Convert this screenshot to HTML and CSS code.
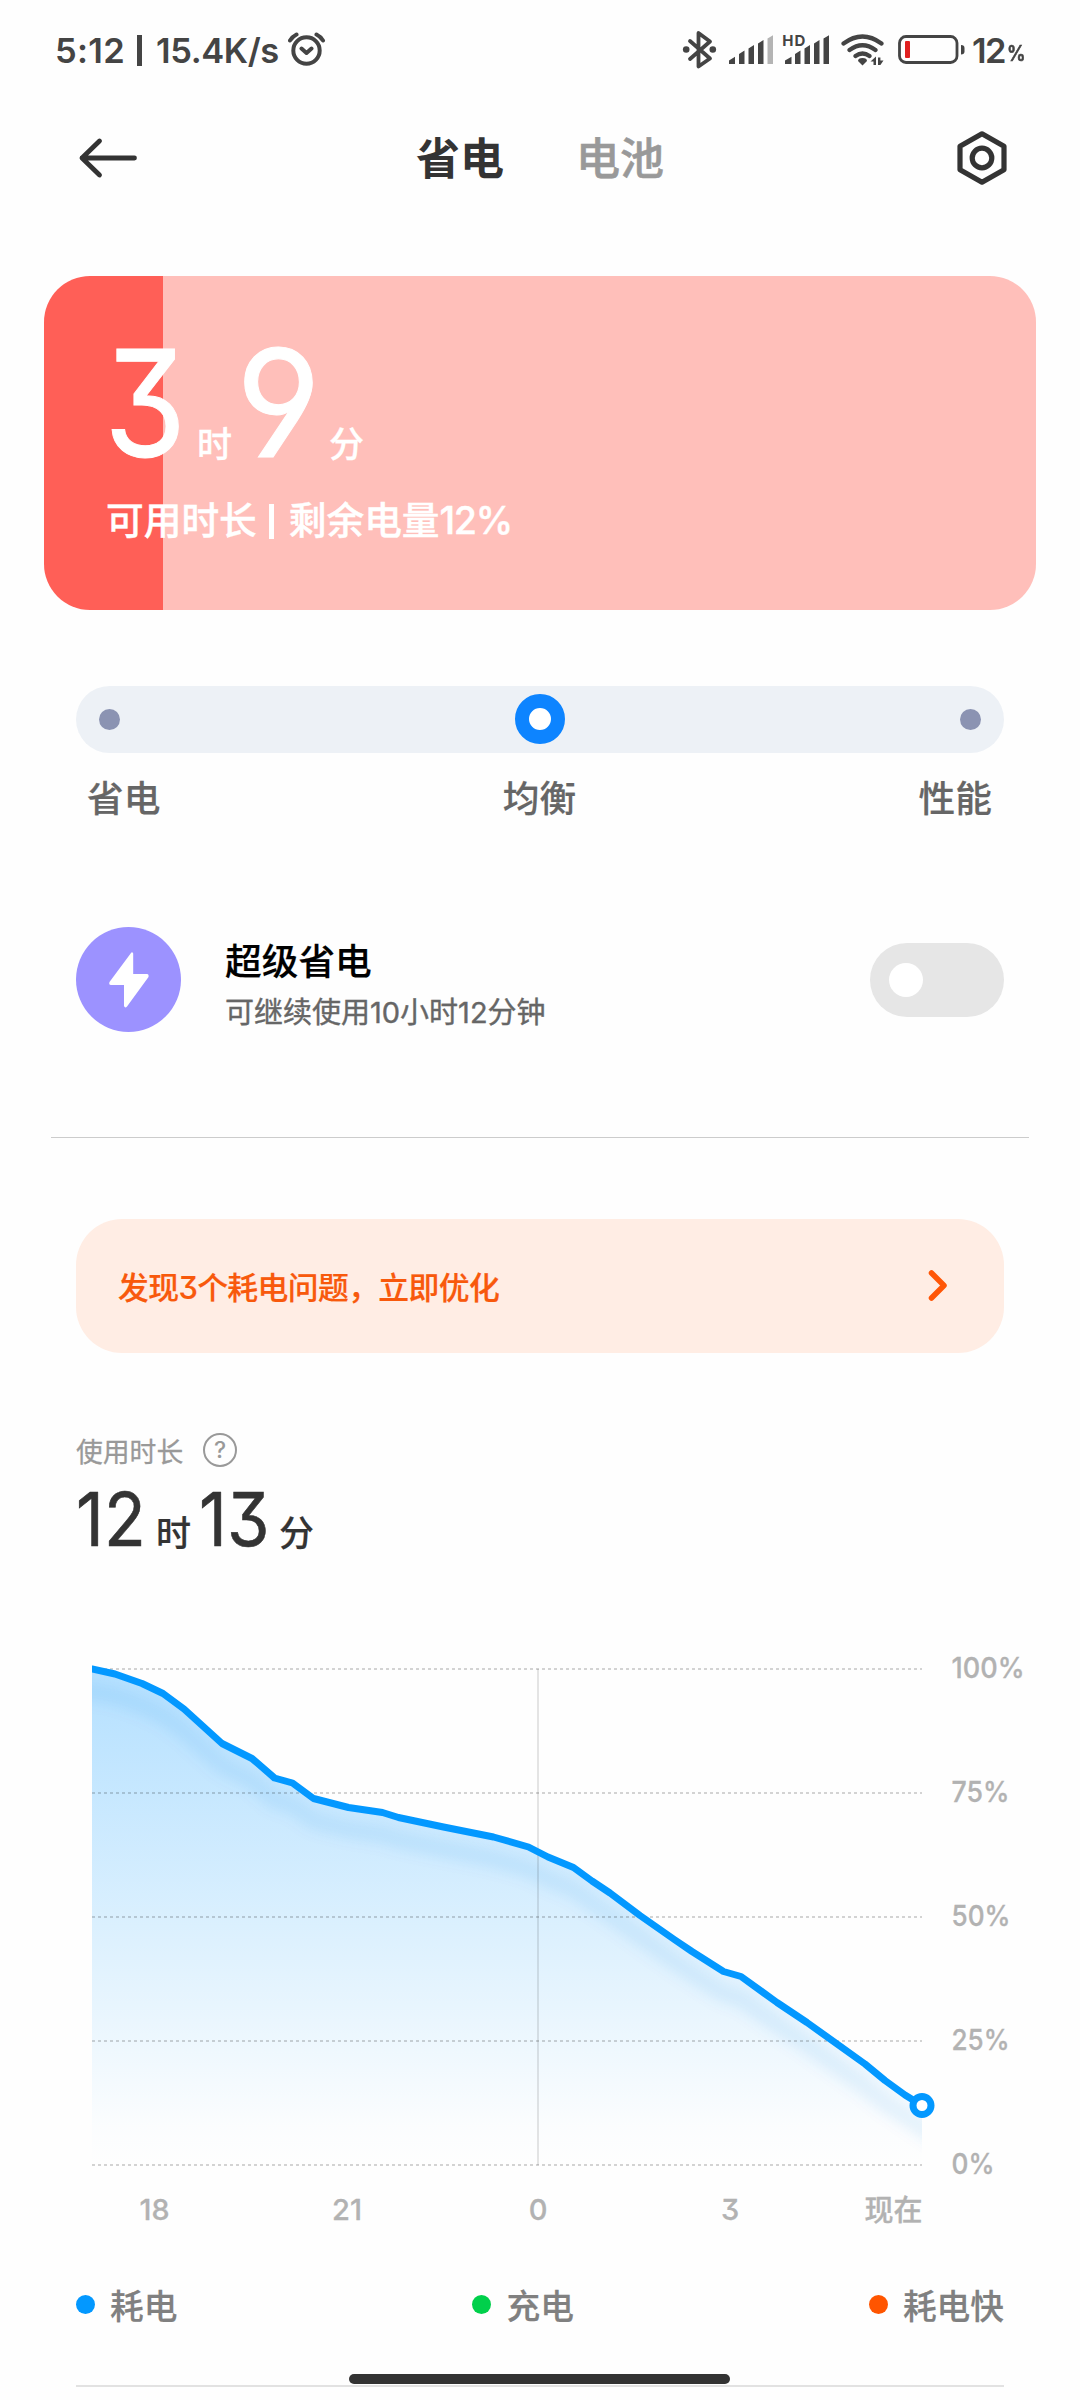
FILE: index.html
```html
<!DOCTYPE html>
<html lang="zh-CN">
<head>
<meta charset="utf-8">
<title>省电</title>
<link rel="stylesheet" href="styles.css">
</head>
<body>
<div class="screen">
  <div class="status">
    <span class="clock">5:12</span>
    <span class="sep"></span>
    <span class="speed">15.4K/s</span>
    <svg class="alarm" width="38" height="36" viewBox="288 32 38 36" fill="none" stroke="#444" stroke-width="4" stroke-linecap="round" stroke-linejoin="round">
      <circle cx="306.500" cy="50.500" r="13.200"/><path d="M290 40.500Q292.500 36.500 296.500 34.500M316.500 34.500Q320.500 36.500 323 40.500M301.500 48.500l5 4.500 5-4.500"/>
    </svg>
    <svg class="icons" width="284" height="44" viewBox="682 28 284 44">
      <g fill="none" stroke="#444" stroke-width="3.800" stroke-linejoin="round" stroke-linecap="round"><path d="M690 41l20 17.500-11.500 8V33l11.500 8.500L690 59"/></g>
      <g fill="#444"><circle cx="686.200" cy="49.500" r="3.300"/><circle cx="712.800" cy="49.500" r="3.300"/>
        <path d="M729 64v-3.500l6-3.800V64zM739 64V54l5.500-3.500V64zM748.500 64V48.500l5.500-3.500V64zM758 64V43.500l5.500-3.500V64z"/>
        <path d="M767.500 64V38.500l5.500-3.300V64z" fill="#b4b4b4"/>
        <path d="M785 64v-3.500l6.500-3.800V64zM795 64V54l5.500-3.500V64zM804.500 64V48.500l5.500-3.500V64zM814 64V43.500l5.500-3.500V64zM823.500 64V38.500l5.500-3.300V64z"/>
        <path d="M862.500 65.500l-4.500-4.500q0-3 4.500-3t4.500 3z"/>
        <path d="M870.500 61.500l5.500-5V65h-2.500v-3.500zM878 57.500h2.400v3h3.100l-3.100 4.500H878z"/>
      </g>
      <text class="hd" x="782.300" y="45.500" textLength="23">HD</text>
      <g fill="none" stroke="#444" stroke-width="4.200" stroke-linecap="round"><path d="M843.500 43.500q19-14 38 0M849.500 50q13-9.500 26 0M855.500 56q7-5 14 0"/></g>
      <rect x="899.500" y="36.500" width="57.500" height="26" rx="6.500" fill="none" stroke="#444" stroke-width="2.800"/>
      <rect x="905" y="41" width="5" height="17" rx="1" fill="#e02020"/>
      <path d="M961 45q3.500 0 3.500 3v3.500q0 3-3.500 3z" fill="#444"/>
    </svg>
    <span class="level">12</span><span class="percent">%</span>
  </div>

  <header class="header">
    <svg class="back" width="60" height="44" viewBox="78 136 60 44" fill="none" stroke="#333" stroke-width="4.800" stroke-linecap="round" stroke-linejoin="round"><path d="M134.500 158H82M99.500 141L82 158l17.500 17"/></svg>
    <nav class="tabs"><span class="tab active">省电</span><span class="tab">电池</span></nav>
    <svg class="gear" width="56" height="60" viewBox="954 128 56 60" fill="none" stroke="#333" stroke-width="5.200" stroke-linejoin="round"><path d="M982 133.800l22 12.500v23.400l-22 12.500-22-12.500v-23.400z"/><circle cx="982" cy="158" r="9.800"/></svg>
  </header>

  <section class="battery">
    <div class="time">
      <span class="num three">3</span><span class="unit">时</span><span class="num nine">9</span><span class="unit">分</span>
    </div>
    <div class="remain"><span>可用时长</span><i class="bar"></i><span>剩余电量</span><span class="pct">12%</span></div>
  </section>

  <div class="slider"><i class="dot"></i><i class="thumb"></i><i class="dot"></i></div>
  <div class="modes"><span>省电</span><span>均衡</span><span>性能</span></div>

  <section class="super">
    <svg width="105" height="105" viewBox="76 927 105 105"><circle cx="128.500" cy="979.500" r="52.500" fill="#9c92ff"/><path d="M131 953l-21.500 29q-1 3 1.500 3h13v21q1 2.500 3 .5l21.500-29.500q.500-3-1.500-3h-13.800v-20.500q-1-2-2.200-.500z" fill="#fff"/></svg>
    <div class="super-text"><div class="super-title">超级省电</div><div class="super-sub">可继续使用10小时12分钟</div></div>
    <div class="toggle"><i></i></div>
  </section>
  <div class="divider"></div>

  <section class="notice">
    <span class="notice-text">发现3个耗电问题，立即优化</span>
    <svg width="24" height="36" viewBox="925 1267 24 36" fill="none" stroke="#ff5606" stroke-width="5.500" stroke-linecap="round" stroke-linejoin="round"><path d="M931.500 1273l12.500 12.500-12.500 12.500"/></svg>
  </section>

  <div class="usage-label"><span>使用时长</span><i class="help">?</i></div>
  <div class="usage"><span class="n">12</span><span class="u">时</span><span class="n">13</span><span class="u">分</span></div>

  <svg class="chart" width="1080" height="686" viewBox="0 1554 1080 686">
    <defs>
      <linearGradient id="fade" gradientUnits="userSpaceOnUse" x1="0" y1="1669" x2="0" y2="2165"><stop offset="0" stop-color="#b4e0ff"/><stop offset=".92" stop-color="#b0dfff" stop-opacity=".04"/><stop offset="1" stop-color="#b0dfff" stop-opacity="0"/></linearGradient>
      <filter id="soft" filterUnits="userSpaceOnUse" x="60" y="1640" width="900" height="540"><feGaussianBlur stdDeviation="7"/></filter>
      <clipPath id="under"><path d="M92 1669L115 1674 142 1683.500 163 1693.500 184 1709 222 1743.500 252 1758.500 274.500 1778 292.500 1783 313.500 1798.500 348.500 1807.500 382.500 1812.500 398.500 1817.500 443.500 1827 493.500 1837 528.500 1847 548 1857 573.500 1867.500 592 1881 610 1893 640 1915.500 675 1940 692 1951.500 723.500 1971.500 741 1976.500 777 2002.500 807 2022.500 865 2064 885 2080.500 905 2095 922 2105.500V2165H92z"/></clipPath>
      <clipPath id="plot"><path d="M92 1640H960V2180H92z"/></clipPath>
    </defs>
    <g clip-path="url(#under)">
      <rect x="92" y="1660" width="830" height="505" fill="url(#fade)"/>
      <path class="glow" filter="url(#soft)" d="M60 1686L115 1696 142 1705.500 163 1715.500 184 1731 222 1765.500 252 1780.500 274.500 1800 292.500 1805 313.500 1820.500 348.500 1829.500 382.500 1834.500 398.500 1839.500 443.500 1849 493.500 1859 528.500 1869 548 1879 573.500 1889.500 592 1903 610 1915 675 1962 692 1973.500 723.500 1993.500 741 1998.500 777 2024.500 807 2044.500 865 2086 885 2102.500 922 2127.500 950 2146"/>
    </g>
    <path class="grid" d="M92 1669H922M92 1793H922M92 1917H922M92 2041H922M92 2165H922"/>
    <path class="midnight" d="M538 1669V2165"/>
    <path class="line" clip-path="url(#plot)" d="M86 1668L92 1669 115 1674 142 1683.500 163 1693.500 184 1709 222 1743.500 252 1758.500 274.500 1778 292.500 1783 313.500 1798.500 348.500 1807.500 382.500 1812.500 398.500 1817.500 443.500 1827 493.500 1837 528.500 1847 548 1857 573.500 1867.500 592 1881 610 1893 640 1915.500 675 1940 692 1951.500 723.500 1971.500 741 1976.500 777 2002.500 807 2022.500 865 2064 885 2080.500 905 2095 922 2105.500"/>
    <circle cx="922" cy="2105.500" r="9" fill="#fff" stroke="#0398ff" stroke-width="7"/>
    <g class="axis">
      <text x="951.500" y="1678" textLength="73" lengthAdjust="spacingAndGlyphs">100%</text><text x="951.500" y="1802" textLength="58" lengthAdjust="spacingAndGlyphs">75%</text><text x="951.500" y="1926" textLength="59" lengthAdjust="spacingAndGlyphs">50%</text><text x="951.500" y="2050" textLength="58" lengthAdjust="spacingAndGlyphs">25%</text><text x="951.500" y="2174" textLength="43" lengthAdjust="spacingAndGlyphs">0%</text>
      <g text-anchor="middle"><text x="154.500" y="2220" textLength="30" lengthAdjust="spacingAndGlyphs">18</text><text x="347" y="2220" textLength="30" lengthAdjust="spacingAndGlyphs">21</text><text x="538" y="2220">0</text><text x="730" y="2220">3</text><text x="893.500" y="2220.500">现在</text></g>
    </g>
  </svg>

  <div class="legend">
    <span class="item"><i class="blue"></i><span>耗电</span></span><span class="item"><i class="green"></i><span>充电</span></span><span class="item"><i class="orange"></i><span>耗电快</span></span>
  </div>
  <div class="end-line"></div>
  <div class="home-pill"></div>
</div>
</body>
</html>
```
FILE: styles.css
```css
* { box-sizing: border-box; }
body {
  margin: 0;
  background: #fefefe;
  font-family: Inter, "Noto Sans CJK SC", sans-serif;
  font-feature-settings: "cv09" 1, "cv04" 1;
  font-weight: 500;
  color: #333;
}
i { font-style: normal; display: block; }
svg { display: block; flex: none; }
.screen { position: relative; width: 1080px; height: 2400px; overflow: hidden; display: flex; flex-direction: column; white-space: nowrap; }
.screen > * { flex: none; }

.status { height: 100px; display: flex; align-items: center; padding-left: 55px; color: #444; font-size: 34.500px; font-weight: 600; line-height: 40px; padding-top: 1px; }
.clock { width: 82px; letter-spacing: .3px; }
.sep { width: 5px; height: 31px; background: #444; margin-right: 14px; }
.speed { width: 132px; letter-spacing: -.4px; }
.alarm { margin-top: -1px; }
.icons { margin-left: 356px; margin-top: -1px; }
.hd { font-size: 15px; font-weight: 700; fill: #444; }
.level { width: 41px; margin-left: 6px; letter-spacing: -1.500px; }
.percent { font-size: 21px; line-height: 30px; margin-top: 7px; margin-left: -6px; transform: scaleX(.88); transform-origin: 0 50%; -webkit-text-stroke: .6px #444; }

.header { height: 116px; padding: 0 70px 0 78px; display: flex; align-items: center; justify-content: space-between; }
.tabs { display: flex; gap: 72px; margin-right: 12px; padding-top: 1px; }
.tab { font-size: 44px; line-height: 60px; color: #999; -webkit-text-stroke: .6px; }
.tab.active { color: #333; font-weight: 700; -webkit-text-stroke: 0; }

.battery { margin: 60px 44px 0; height: 334px; padding: 64px 0 0 62px; border-radius: 46px; color: #fff; background: linear-gradient(90deg, #ff5f57 119px, #ffbfba 119px); }
.time { height: 127px; display: flex; align-items: flex-end; }
.num { font-size: 149px; font-weight: 400; line-height: 127px; transform-origin: 0 50%; -webkit-text-stroke: 1px #fff; }
.three { width: 91px; margin-left: -2px; margin-right: 2px; transform: scaleX(.89); }
.nine { width: 95px; margin-left: 2px; margin-right: -2px; transform: scaleX(.98); }
.unit { width: 37px; font-size: 35px; line-height: 42px; margin-bottom: 2px; -webkit-text-stroke: .3px; }
.remain { display: flex; align-items: center; height: 42px; margin-top: 32px; font-size: 37.700px; line-height: 42px; -webkit-text-stroke: .4px #fff; }
.bar { width: 5px; height: 35px; background: #fff; margin: 2px 15px 0 12px; }
.pct { letter-spacing: -1.300px; }

.slider { margin: 76px 76px 0; height: 67px; padding: 0 23px 1px; border-radius: 34px; background: #edf1f6; display: flex; align-items: center; justify-content: space-between; }
.dot { width: 21px; height: 21px; border-radius: 50%; background: #8b93b2; }
.thumb { width: 50px; height: 50px; border-radius: 50%; border: 14.500px solid #0d84ff; background: #fff; }
.modes { margin: 13px 88px 2px 87px; height: 60px; display: flex; justify-content: space-between; align-items: center; font-size: 36.700px; color: #666; -webkit-text-stroke: .2px; }

.super { margin: 99px 76px 0; height: 105px; display: flex; align-items: center; }
.super-text { margin-left: 44px; flex: 1; padding-top: 11px; }
.super-title { font-size: 36.700px; line-height: 48px; color: #000; -webkit-text-stroke: .2px; }
.super-sub { font-size: 29px; line-height: 40px; margin-top: 7px; color: #666; font-weight: 400; -webkit-text-stroke: .4px; }
.toggle { width: 134px; height: 74px; border-radius: 37px; background: #e6e6e6; padding: 20px 19px; }
.toggle i { width: 34px; height: 34px; border-radius: 50%; background: #fff; }
.divider { margin: 105px 51px 0; height: 1px; background: #ccc; }

.notice { margin: 81px 76px 0; height: 134px; padding: 0 55px 2px 42px; border-radius: 46px; background: #ffede4; color: #f8590c; font-size: 30.800px; display: flex; align-items: center; justify-content: space-between; -webkit-text-stroke: .2px; }
.notice-text { letter-spacing: -.600px; }

.usage-label { margin: 80px 76px 1px; height: 34px; display: flex; align-items: center; font-size: 26.800px; color: #999; font-weight: 400; -webkit-text-stroke: .3px; }
.help { width: 34px; height: 34px; margin-left: 20px; border: 2.500px solid #999; border-radius: 50%; font-size: 23px; line-height: 30px; text-align: center; font-weight: 500; -webkit-text-stroke: 0; }
.usage { margin: 16px 0 0 76px; height: 70px; display: flex; align-items: flex-end; }
.usage .n { width: 80px; font-size: 74.500px; line-height: 70px; font-weight: 400; transform: scaleX(.92); transform-origin: 0 50%; -webkit-text-stroke: .6px; }
.usage .u { width: 43px; font-size: 35px; line-height: 42px; -webkit-text-stroke: .2px; }

.grid { fill: none; stroke: #000; stroke-opacity: .17; stroke-width: 2; stroke-dasharray: 3 3; }
.midnight { stroke: #000; stroke-opacity: .1; stroke-width: 2; }
.line { fill: none; stroke: #0398ff; stroke-width: 7; stroke-linejoin: round; }
.glow { fill: none; stroke: #0080dd; stroke-opacity: .095; stroke-width: 17; }
.axis { font-size: 29px; fill: #b2b2b2; stroke: #b2b2b2; stroke-width: .3px; }

.legend { margin: 44px 76px 0; height: 40px; display: flex; justify-content: space-between; align-items: center; font-size: 33.700px; line-height: 40px; color: #808080; -webkit-text-stroke: .2px; }
.item { display: flex; align-items: center; }
.item i { width: 19px; height: 19px; border-radius: 50%; margin-right: 15px; }
.item span { padding-top: 4px; line-height: 37px; }
.blue { background: #0398ff; }
.green { background: #00d04b; }
.orange { background: #ff5500; }
.end-line { margin: 61px 76px 0; height: 2px; background: #e2e2e2; }
.home-pill { position: absolute; left: 349px; top: 2374px; width: 381px; height: 10px; border-radius: 5px; background: #333; }
```
